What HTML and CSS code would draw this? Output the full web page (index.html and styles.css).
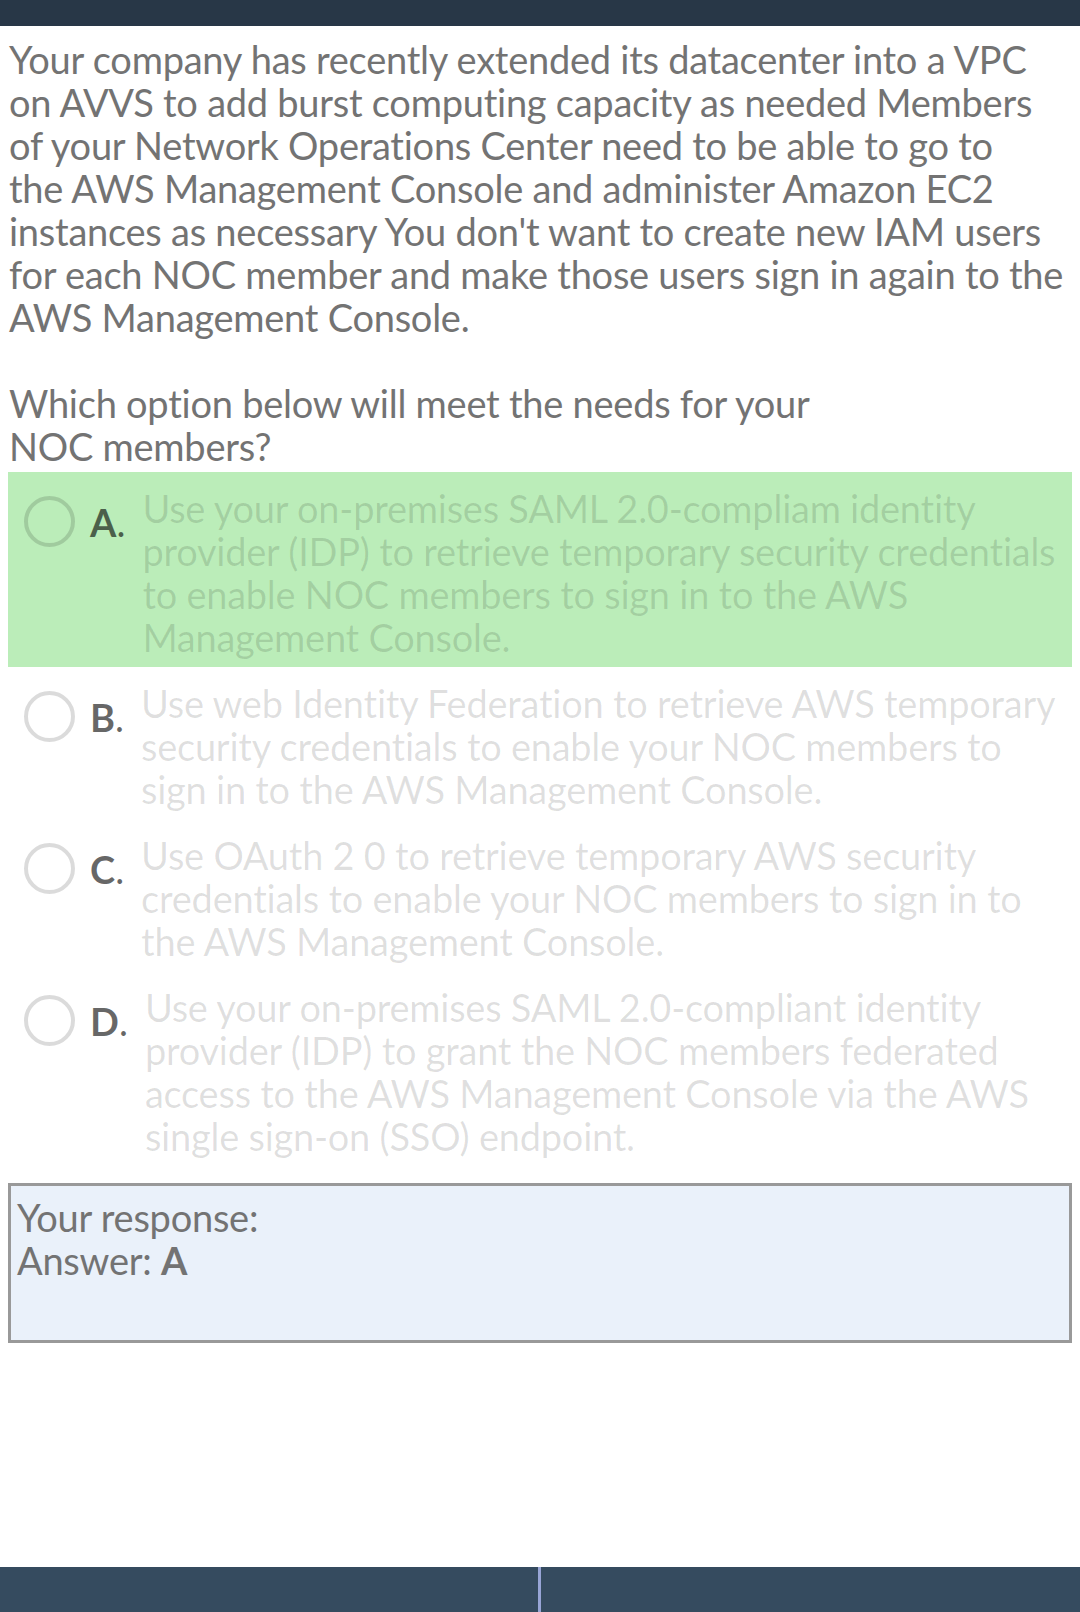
FILE: index.html
```html
<!DOCTYPE html>
<html lang="en">
<head>
<meta charset="utf-8">
<title>Question</title>
<link rel="stylesheet" href="styles.css">
</head>
<body>
<div class="page">
  <header class="topbar"></header>
  <main class="content">
    <p class="question">Your company has recently extended its datacenter into a VPC<br>on AVVS to add burst computing capacity as needed Members<br>of your Network Operations Center need to be able to go to<br>the AWS Management Console and administer Amazon EC2<br>instances as necessary You don't want to create new IAM users<br>for each NOC member and make those users sign in again to the<br>AWS Management Console.</p>
    <p class="question prompt">Which option below will meet the needs for your<br>NOC members?</p>

    <div class="options">
      <div class="option selected">
        <span class="radio"></span>
        <span class="letter"><b>A</b>.</span>
        <span class="text">Use your on-premises SAML 2.0-compliam identity provider (IDP) to retrieve temporary security credentials to enable NOC members to sign in to the AWS Management Console.</span>
      </div>
      <div class="option">
        <span class="radio"></span>
        <span class="letter"><b>B</b>.</span>
        <span class="text">Use web Identity Federation to retrieve AWS temporary security credentials to enable your NOC members to sign in to the AWS Management Console.</span>
      </div>
      <div class="option">
        <span class="radio"></span>
        <span class="letter"><b>C</b>.</span>
        <span class="text">Use OAuth 2 0 to retrieve temporary AWS security credentials to enable your NOC members to sign in to the AWS Management Console.</span>
      </div>
      <div class="option">
        <span class="radio"></span>
        <span class="letter"><b>D</b>.</span>
        <span class="text">Use your on-premises SAML 2.0-compliant identity provider (IDP) to grant the NOC members federated access to the AWS Management Console via the AWS single sign-on (SSO) endpoint.</span>
      </div>
    </div>

    <div class="response">
      <div>Your response:</div>
      <div>Answer: <b>A</b></div>
    </div>
  </main>
  <footer class="bottombar">
    <div class="half"></div>
    <div class="divider"></div>
    <div class="half"></div>
  </footer>
</div>
</body>
</html>
```

FILE: styles.css
```css
html, body {
  margin: 0;
  padding: 0;
  background: #ffffff;
}

body {
  font-family: Lato, "Noto Sans", "Liberation Sans", sans-serif;
  font-weight: 400;
  font-size: 38px;
  line-height: 43px;
  letter-spacing: -0.25px;
  color: #737373;
  font-variant-ligatures: none;
}

.page {
  min-height: 100vh;
  display: flex;
  flex-direction: column;
}

.topbar {
  height: 26px;
  background: #283747;
  flex: none;
}

.content {
  flex: 1;
  padding: 12px 8px 0 8px;
}

.question {
  margin: 0 0 43px 1px;
  white-space: nowrap;
}

.question.prompt {
  margin-bottom: 4px;
}

.options {
  display: flex;
  flex-direction: column;
}

.option {
  display: flex;
  align-items: flex-start;
  padding: 15px 2px 8px 16px;
}

.option.selected {
  background: #bbedb9;
}

.radio {
  flex: none;
  width: 43px;
  height: 43px;
  border: 4.5px solid rgba(0, 0, 0, 0.14);
  border-radius: 50%;
  margin-top: 9px;
  margin-right: 15px;
}

.letter {
  flex: none;
  margin-top: 14px;
  margin-right: 17px;
  color: rgba(0, 0, 0, 0.6);
  letter-spacing: 0;
}

.letter b {
  font-weight: 700;
}

.text {
  flex: 1;
  color: rgba(0, 0, 0, 0.13);
}

.response {
  height: 160px;
  margin-top: 17px;
  border: 3px solid #999999;
  background: #eaf1fa;
  padding: 10px 0 0 6px;
  box-sizing: border-box;
}

.response b {
  font-weight: 700;
}

.bottombar {
  flex: none;
  height: 45px;
  display: grid;
  grid-template-columns: 538px 3px 1fr;
  background: #354b5f;
}

.divider {
  background: #98a5d6;
}
```
